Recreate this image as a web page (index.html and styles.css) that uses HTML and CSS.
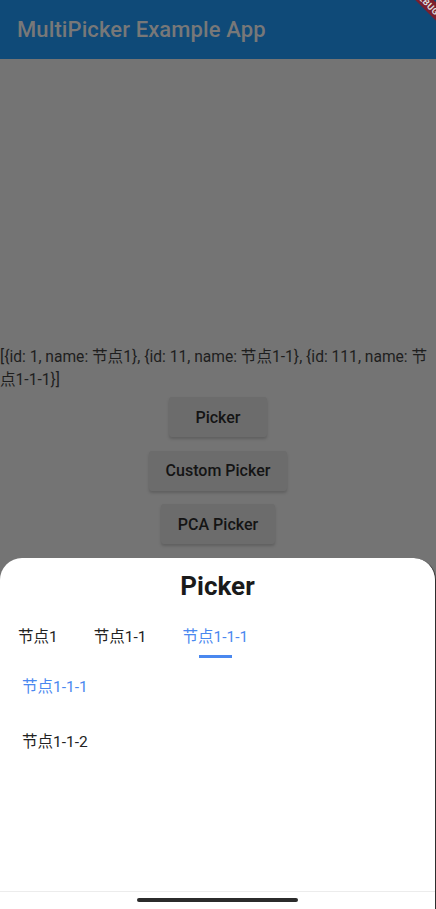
FILE: index.html
```html
<!DOCTYPE html>
<html lang="zh">
<head>
<meta charset="utf-8">
<link rel="stylesheet" href="styles.css">
</head>
<body>
<div class="app">
  <header class="appbar">
    <h1 class="title">MultiPicker Example App</h1>
    <div class="debug"><span>DEBUG</span></div>
  </header>
  <main class="content">
    <p class="result">[{id: 1, name: 节点1}, {id: 11, name: 节点1-1}, {id: 111, name: 节点1-1-1}]</p>
    <div class="buttons">
      <button class="btn">Picker</button>
      <button class="btn">Custom Picker</button>
      <button class="btn">PCA Picker</button>
      <button class="btn btn-hidden" aria-hidden="true"></button>
    </div>
  </main>
  <section class="sheet">
    <h2 class="sheet-title">Picker</h2>
    <nav class="tabs">
      <span class="tab">节点1</span>
      <span class="tab">节点1-1</span>
      <span class="tab active">节点1-1-1</span>
    </nav>
    <ul class="list">
      <li class="item selected">节点1-1-1</li>
      <li class="item">节点1-1-2</li>
    </ul>
    <div class="navbar"><div class="home"></div></div>
  </section>
</div>
</body>
</html>
```
FILE: styles.css
```css
html, body {
  margin: 0;
  padding: 0;
}
body {
  width: 436px;
  height: 909px;
  overflow: hidden;
  background: #747474;
  font-family: Roboto, "Noto Sans CJK SC", sans-serif;
}
.app {
  position: relative;
  width: 436px;
  height: 909px;
  display: flex;
  flex-direction: column;
}
.appbar {
  position: relative;
  height: 59px;
  background: #0f4a78;
  display: flex;
  align-items: center;
  padding-left: 17px;
  overflow: hidden;
  flex: none;
}
.title {
  margin: 0;
  font-size: 22px;
  font-weight: 500;
  color: #787878;
  letter-spacing: 0.1px;
}
.debug {
  position: absolute;
  top: -4px;
  right: -36px;
  width: 90px;
  height: 13px;
  background: #7a1f2e;
  transform: rotate(45deg);
  display: flex;
  justify-content: center;
  align-items: center;
}
.debug span {
  font-size: 9px;
  font-weight: 700;
  color: #ddd;
  letter-spacing: 0.5px;
}
.content {
  padding-top: 287px;
  display: flex;
  flex-direction: column;
}
.result {
  margin: 0;
  font-size: 15.6px;
  line-height: 23px;
  color: #1e1e1e;
}
.buttons {
  margin-top: 5px;
  display: flex;
  flex-direction: column;
  align-items: center;
  gap: 13.5px;
}
.btn {
  height: 40px;
  min-width: 98px;
  padding: 0 17px;
  border: none;
  border-radius: 3px;
  background: #6c6c6c;
  box-shadow: 0 2px 3px rgba(0,0,0,0.18);
  font-family: Roboto, sans-serif;
  font-size: 16px;
  font-weight: 500;
  color: #141414;
}
.btn-hidden {
  width: 122px;
}
.sheet {
  position: absolute;
  left: 0;
  top: 558px;
  width: 435px;
  height: 351px;
  background: #fff;
  border-radius: 22px 22px 0 0;
  border-right: 1px solid #2e2e2e;
  display: flex;
  flex-direction: column;
}
.sheet-title {
  margin: 12px 0 0;
  text-align: center;
  font-size: 26px;
  font-weight: 700;
  line-height: 32px;
  color: #1a1a1a;
}
.tabs {
  margin-top: 23px;
  display: flex;
  gap: 36px;
  padding-left: 18px;
  height: 34px;
}
.tab {
  position: relative;
  font-size: 15.5px;
  line-height: 24px;
  color: #222;
}
.tab.active {
  color: #4a88ef;
}
.tab.active::after {
  content: "";
  position: absolute;
  left: 17px;
  width: 33px;
  top: 30px;
  height: 3px;
  background: #4a88ef;
}
.list {
  list-style: none;
  margin: 7px 0 0;
  padding: 0 0 0 22px;
}
.item {
  height: 55px;
  line-height: 42px;
  font-size: 15.5px;
  color: #222;
}
.item.selected {
  color: #4a88ef;
}
.navbar {
  margin-top: auto;
  height: 17px;
  border-top: 1px solid #ececec;
  display: flex;
  justify-content: center;
  align-items: flex-start;
}
.home {
  margin-top: 6px;
  width: 161px;
  height: 4px;
  border-radius: 2px;
  background: #2b2b2b;
}
```
